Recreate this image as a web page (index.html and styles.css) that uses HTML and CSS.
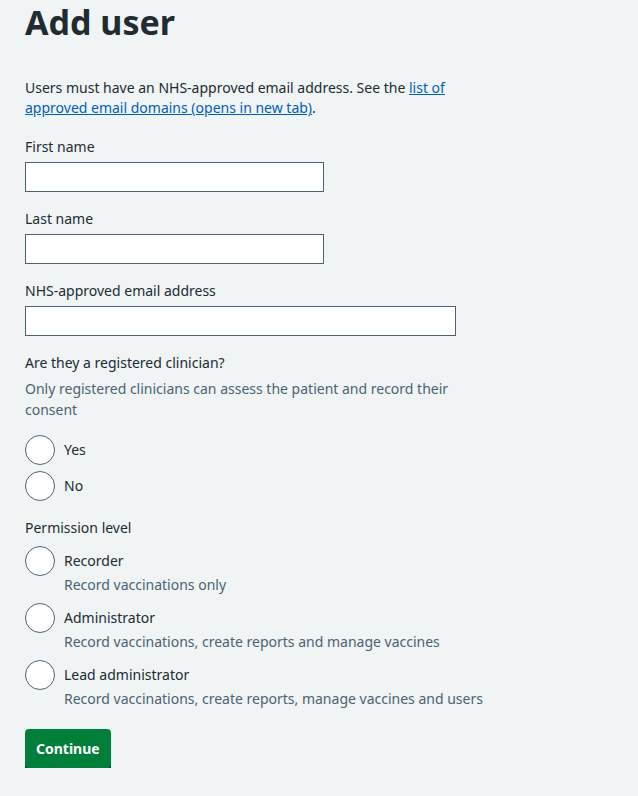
FILE: index.html
```html
<!DOCTYPE html>
<html lang="en">
<head>
<meta charset="utf-8">
<title>Add user</title>
<link rel="stylesheet" href="styles.css">
</head>
<body>
<main class="page">
  <h1 class="title">Add user</h1>
  <p class="intro">Users must have an NHS-approved email address. See the <a href="#" class="link">list of approved email domains (opens in new tab)</a>.</p>

  <div class="field">
    <label class="label" for="first">First name</label>
    <input class="input input-short" id="first" type="text">
  </div>
  <div class="field">
    <label class="label" for="last">Last name</label>
    <input class="input input-short" id="last" type="text">
  </div>
  <div class="field">
    <label class="label" for="email">NHS-approved email address</label>
    <input class="input input-long" id="email" type="text">
  </div>

  <fieldset class="group">
    <legend class="label">Are they a registered clinician?</legend>
    <div class="hint">Only registered clinicians can assess the patient and record their consent</div>
    <div class="radios radios-tight">
      <label class="radio"><span class="circle"></span><span class="radio-text">Yes</span></label>
      <label class="radio"><span class="circle"></span><span class="radio-text">No</span></label>
    </div>
  </fieldset>

  <fieldset class="group">
    <legend class="label">Permission level</legend>
    <div class="radios radios-loose">
      <label class="radio"><span class="circle"></span><span class="radio-text">Recorder</span><span class="radio-hint">Record vaccinations only</span></label>
      <label class="radio"><span class="circle"></span><span class="radio-text">Administrator</span><span class="radio-hint">Record vaccinations, create reports and manage vaccines</span></label>
      <label class="radio"><span class="circle"></span><span class="radio-text">Lead administrator</span><span class="radio-hint">Record vaccinations, create reports, manage vaccines and users</span></label>
    </div>
  </fieldset>

  <button class="button" type="button">Continue</button>
</main>
</body>
</html>
```
FILE: styles.css
```css
html, body {
  margin: 0;
  padding: 0;
  background: #f0f4f5;
}
body {
  font-family: "Noto Sans", "Open Sans", sans-serif;
  color: #212b32;
  font-size: 14px;
  line-height: 20px;
}
.page {
  padding: 0 25px;
  display: flex;
  flex-direction: column;
  align-items: flex-start;
}
.title {
  margin: 0;
  font-size: 34px;
  line-height: 44px;
  font-weight: 700;
}
.intro {
  margin: 34px 0 0;
  max-width: 440px;
}
.link {
  color: #005eb8;
  text-decoration: underline;
}
.field {
  display: flex;
  flex-direction: column;
  margin-top: 19px;
}
.field + .field {
  margin-top: 17px;
}
.label {
  display: block;
  padding: 0;
  line-height: 20px;
}
.input {
  margin-top: 5px;
  height: 30px;
  box-sizing: border-box;
  border: 1px solid #4c6272;
  background: #fff;
  font: inherit;
  padding: 0 6px;
}
.input-short { width: 299px; }
.input-long { width: 431px; }
.group {
  border: 0;
  margin: 17px 0 0;
  padding: 0;
  min-width: 0;
}
.group legend { padding: 0; }
.hint {
  color: #4c6272;
  margin-top: 5px;
  line-height: 21px;
  max-width: 440px;
}
.radios {
  display: flex;
  flex-direction: column;
}
.radios-tight {
  margin-top: 15px;
  gap: 6px;
}
.radios-loose {
  margin-top: 8px;
  gap: 8px;
}
.radio {
  display: grid;
  grid-template-columns: 30px auto;
  column-gap: 9px;
  align-items: center;
}
.circle {
  width: 30px;
  height: 30px;
  box-sizing: border-box;
  border: 1px solid #4c6272;
  border-radius: 50%;
  background: #fff;
}
.radio-text {
  line-height: 20px;
}
.radio-hint {
  grid-column: 2;
  color: #4c6272;
  line-height: 20px;
  margin-top: -1px;
}
.button {
  margin-top: 20px;
  height: 39px;
  padding: 0 11px;
  border: 0;
  border-radius: 4px;
  background: #007f3b;
  box-shadow: 0 4px 0 #00401e;
  color: #fff;
  font-family: inherit;
  font-size: 14px;
  font-weight: 700;
  cursor: pointer;
}
```
